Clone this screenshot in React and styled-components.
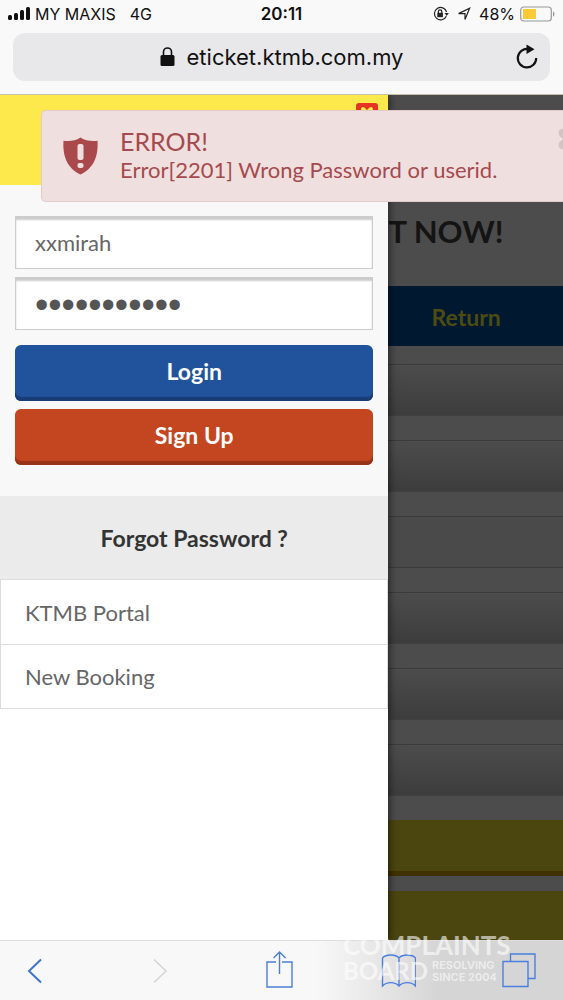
import React from 'react';
import styled, { createGlobalStyle } from 'styled-components';

const GlobalStyle = createGlobalStyle`
  * {
    box-sizing: border-box;
  }
  body {
    margin: 0;
    font-family: Lato, "Liberation Sans", sans-serif;
    font-size: 22px;
    color: #555;
    background: #fff;
  }
  button, input {
    font: inherit;
  }
  svg {
    flex: none;
  }
`;

const Screen = styled.div`
  display: flex;
  flex-direction: column;
  min-height: 100vh;
  overflow: hidden;
`;

const BrowserTop = styled.header`
  position: relative;
  z-index: 1;
  padding-bottom: 13px;
  background: #f9f9f9;
  border-bottom: 1px solid #c4c1ae;
  font-family: Inter, "Liberation Sans", sans-serif;
  color: #111;
`;

const StatusBar = styled.div`
  display: grid;
  grid-template-columns: 1fr auto 1fr;
  align-items: center;
  height: 28px;
  padding: 0 8px;
  font-size: 16px;
`;

const StatusGroup = styled.div`
  display: flex;
  align-items: center;
  justify-content: ${props => props.$end ? 'flex-end' : 'flex-start'};
  gap: ${props => props.$gap}px;
`;

const Clock = styled.span`
  font-size: 17px;
  font-weight: 600;
`;

const AddressBar = styled.div`
  display: grid;
  grid-template-columns: 24px 1fr 24px;
  align-items: center;
  height: 48px;
  margin: 5px 13px 0;
  padding: 0 11px;
  border-radius: 12px;
  background: #e8e8ea;
`;

const Address = styled.button`
  grid-column: 2;
  display: flex;
  align-items: center;
  justify-content: center;
  gap: 12px;
  padding: 0;
  border: none;
  background: none;
  color: #111;
  font-size: 22px;
`;

const IconButton = styled.button`
  display: flex;
  padding: 0;
  border: none;
  background: none;
  color: ${props => props.$color || '#111'};
`;

const Content = styled.div`
  position: relative;
  flex: 1;
  display: flex;
`;

const Drawer = styled.aside`
  flex: 0 0 69%;
  position: relative;
  background: #fff;
  box-shadow: 1px 0 8px rgba(0, 0, 0, 0.6);
`;

const DrawerTop = styled.div`
  display: flex;
  justify-content: flex-end;
  align-items: flex-start;
  height: 90px;
  padding: 8px 10px;
  background: #fde94b;
`;

const CloseDrawer = styled.button`
  display: flex;
  justify-content: center;
  width: 22px;
  height: 22px;
  padding: 3px;
  border: none;
  border-radius: 3px;
  background: #e63323;
`;

const LoginForm = styled.form`
  display: flex;
  flex-direction: column;
  gap: 8px;
  padding: 31px 15px;
  background: #f8f8f8;
`;

const Field = styled.input`
  width: 100%;
  height: 53px;
  padding: 0 19px;
  border: 1px solid #ccc;
  border-radius: 0;
  outline: none;
  background: #fff;
  box-shadow: inset 0 3px 2px #ccc;
  color: #666;
`;

const PasswordField = styled(Field)`
  padding-top: 4px;
  font-family: "Liberation Sans", sans-serif;
  font-size: 38px;
  color: #555;
`;

const Buttons = styled.div`
  display: flex;
  flex-direction: column;
  gap: 8px;
  padding-top: 7px;
`;

const Button = styled.button`
  height: 56px;
  padding: 0 0 4px;
  border: none;
  border-radius: 6px;
  background: ${props => props.$color};
  box-shadow: inset 0 -4px 1px ${props => props.$edge};
  color: #fff;
  font-size: 23px;
  font-weight: 700;
`;

const ForgotLink = styled.a`
  display: flex;
  align-items: center;
  justify-content: center;
  height: 83px;
  background: #ebebeb;
  color: #333;
  font-size: 23px;
  font-weight: 700;
  text-decoration: none;
`;

const Menu = styled.nav`
  border: 1px solid #ddd;
`;

const MenuLink = styled.a`
  display: flex;
  align-items: center;
  height: 64px;
  padding: 0 24px;
  color: #666;
  text-decoration: none;

  & + & {
    border-top: 1px solid #ddd;
  }
`;

const Booking = styled.main`
  flex: 1;
  min-width: 0;
  display: flex;
  flex-direction: column;
  overflow: hidden;
  background: #4c4c4c;
`;

const BookingTitle = styled.h1`
  margin: 0;
  padding: 118px 0 37px;
  color: #141414;
  font-size: 31px;
  line-height: 36px;
  white-space: nowrap;
`;

const TabHeader = styled.div`
  height: 60px;
  padding-left: 43px;
  background: #001930;
  color: #4d4b12;
  font-size: 23px;
  font-weight: 700;
  line-height: 62px;
`;

const BookingFields = styled.div`
  display: flex;
  flex-direction: column;
  gap: 24px;
  padding: 18px 0 24px;
`;

const BookingField = styled.div`
  height: 52px;
  border-top: 1px solid #3b3b3b;
  border-bottom: 1px solid ${props => props.$flat ? '#3b3b3b' : '#404040'};
  background: ${props => props.$flat ? '#4a4a4a' : 'linear-gradient(#4c4c4c, #3d3d3d)'};
`;

const YellowBar = styled.div`
  flex: ${props => props.$grow ? '1' : '0 0 56px'};
  margin-bottom: ${props => props.$grow ? 0 : 15}px;
  border-bottom: ${props => props.$grow ? 'none' : '5px solid #3f3100'};
  background: #4b4510;
`;

const Toast = styled.div`
  position: absolute;
  top: 15px;
  left: 41px;
  right: 0;
  display: flex;
  align-items: center;
  height: 92px;
  padding-left: 20px;
  border: 1px solid #e3c9c9;
  border-right: none;
  border-radius: 5px 0 0 5px;
  background: #f0dfdf;
  color: #a54a4e;
  overflow: hidden;
`;

const ToastText = styled.div`
  flex: 1;
  padding: 0 0 3px 21px;
  line-height: 28px;
  white-space: nowrap;
`;

const ToastTitle = styled.div`
  font-size: 25px;
  line-height: 30px;
`;

const ToastClose = styled.button`
  align-self: flex-start;
  display: flex;
  width: 5px;
  margin-top: 16px;
  padding: 0;
  border: none;
  background: none;
  overflow: hidden;
`;

const Toolbar = styled.footer`
  position: relative;
  display: flex;
  align-items: center;
  justify-content: space-between;
  height: 60px;
  padding: 0 27px 0 18px;
  border-top: 1px solid #ddd;
  background: linear-gradient(to right, #f8f8f8 56%, #d5d5d5 78%);
`;

const Watermark = styled.div`
  position: absolute;
  right: 45px;
  bottom: 17px;
  width: 175px;
  color: rgba(255, 255, 255, 0.6);
  font-size: 26px;
  font-weight: 700;
  line-height: 25px;
  pointer-events: none;
`;

const WatermarkRow = styled.div`
  display: flex;
  align-items: center;
  gap: 4px;
  font-size: 24px;
`;

const WatermarkSmall = styled.span`
  font-family: Inter, sans-serif;
  font-size: 11px;
  font-weight: 600;
  line-height: 12px;
  white-space: nowrap;
`;

const SignalIcon = () => (
  <svg width="23" height="14" viewBox="0 0 23 14" fill="#111">
    <rect x="0" y="8" width="4" height="5" rx="1.5" />
    <rect x="6" y="6" width="4" height="7" rx="1.5" />
    <rect x="12" y="3" width="4" height="10" rx="1.5" />
    <rect x="18" y="0" width="4" height="13" rx="1.5" />
  </svg>
);

const RotationLockIcon = () => (
  <svg width="16" height="16" viewBox="0 0 16 16" fill="none" stroke="#222" strokeWidth="1.2">
    <path d="M13.3 10.2A6.2 6.2 0 1 1 13.6 6" />
    <path d="M11.6 7h4.2l-2.1 3z" fill="#222" stroke="none" />
    <rect x="4.3" y="6.8" width="5.6" height="4.4" fill="#222" stroke="none" />
    <path d="M5.4 7V5.6a1.7 1.7 0 0 1 3.4 0V7" />
  </svg>
);

const LocationIcon = () => (
  <svg width="14" height="14" viewBox="0 0 14 14" fill="none" stroke="#222" strokeWidth="1.2">
    <path d="M12.6 1.2L8 12.5V6.6H1.6z" />
  </svg>
);

const BatteryIcon = () => (
  <svg width="35" height="16" viewBox="0 0 35 16" fill="none">
    <rect x="0.7" y="1" width="30.6" height="14" rx="3" stroke="#999" strokeWidth="1.2" />
    <rect x="3" y="3" width="13" height="10" fill="#fcc937" />
    <path d="M33 5.5c2 .6 2 4.4 0 5z" fill="#999" />
  </svg>
);

const LockIcon = () => (
  <svg width="15" height="20" viewBox="0 0 15 20">
    <rect x="0.5" y="8" width="14" height="11" rx="1.5" fill="#111" />
    <path d="M3.5 9V5a4 4 0 0 1 8 0v4" fill="none" stroke="#111" strokeWidth="1.6" />
  </svg>
);

const ReloadIcon = () => (
  <svg width="24" height="26" viewBox="0 0 24 26" fill="none" stroke="#111" strokeWidth="2.2">
    <path d="M13.5 5.1A9.2 9.2 0 1 0 21.2 14" />
    <path d="M11.5 0.5v9.5l8-4.8z" fill="#111" stroke="none" />
  </svg>
);

const ShieldIcon = () => (
  <svg width="37" height="38" viewBox="0 0 37 38">
    <path d="M18.5 0.5c5 3.3 10.5 4 17 3.3C36.5 18 32.5 31 18.5 37.5 4.5 31 .5 18 1.5 3.8 8 4.5 13.5 3.8 18.5 .5z" fill="#a9494c" />
    <rect x="15.5" y="7" width="6" height="16" rx="2" fill="#f0dfdf" />
    <rect x="15.5" y="26" width="6" height="5" rx="2" fill="#f0dfdf" />
  </svg>
);

const BackIcon = () => (
  <svg width="34" height="34" viewBox="0 0 34 34" fill="none" stroke="currentColor" strokeWidth="2">
    <path d="M23 5.5L11 17l12 11.5" />
  </svg>
);

const ForwardIcon = () => (
  <svg width="34" height="34" viewBox="0 0 34 34" fill="none" stroke="currentColor" strokeWidth="1.6">
    <path d="M15 5.5L27 17 15 28.5" />
  </svg>
);

const ShareIcon = () => (
  <svg width="34" height="40" viewBox="0 0 34 40" fill="none" stroke="currentColor" strokeWidth="1.4">
    <path d="M17 11H8v25h25V11H23" />
    <path d="M20.5 23V1M14.5 7l6-6 6 6" />
  </svg>
);

const BookIcon = () => (
  <svg width="36" height="34" viewBox="0 0 36 34" fill="none" stroke="currentColor" strokeWidth="1.4">
    <path d="M19 4C15.5 0 6 0 2.5 4v28c4-4.5 12.5-4.5 16.5 0 4-4.5 12.5-4.5 16.5 0V4C32 0 22.5 0 19 4zM19 4v28" />
  </svg>
);

const TabsIcon = () => (
  <svg width="34" height="36" viewBox="0 0 34 36" fill="none" stroke="currentColor" strokeWidth="1.4">
    <path d="M1 8.5h25v25H1z" />
    <path d="M8.5 8.5V1h24.5v24.5h-7" />
  </svg>
);

class App extends React.Component {
  constructor(props) {
    super(props);
    this.state = {
      userid: 'xxmirah',
      password: 'ktmbpasswrd'
    };

    this.handleChange = this.handleChange.bind(this);
    this.handleSubmit = this.handleSubmit.bind(this);
  }

  handleChange(event) {
    this.setState({[event.target.id]: event.target.value});
  }

  handleSubmit(event) {
    event.preventDefault();
  }

  render() {
    return (
      <Screen>
        <GlobalStyle />
        <BrowserTop>
          <StatusBar>
            <StatusGroup $gap={4}>
              <SignalIcon />
              <StatusGroup $gap={14}>
                <span>MY MAXIS</span>
                <span>4G</span>
              </StatusGroup>
            </StatusGroup>
            <Clock>20:11</Clock>
            <StatusGroup $end $gap={8}>
              <RotationLockIcon />
              <LocationIcon />
              <StatusGroup $gap={5}>
                <span>48%</span>
                <BatteryIcon />
              </StatusGroup>
            </StatusGroup>
          </StatusBar>
          <AddressBar>
            <Address type="button">
              <LockIcon />
              <span>eticket.ktmb.com.my</span>
            </Address>
            <IconButton type="button" aria-label="Reload"><ReloadIcon /></IconButton>
          </AddressBar>
        </BrowserTop>

        <Content>
          <Drawer>
            <DrawerTop>
              <CloseDrawer type="button" aria-label="Close menu">
                <svg width="14" height="14" viewBox="0 0 14 14" stroke="#fde94b" strokeWidth="4" strokeLinecap="round">
                  <path d="M3 3l8 8M11 3l-8 8" />
                </svg>
              </CloseDrawer>
            </DrawerTop>
            <LoginForm onSubmit={this.handleSubmit}>
              <Field id="userid" type="text" aria-label="User id" value={this.state.userid} onChange={this.handleChange} />
              <PasswordField id="password" type="password" aria-label="Password" value={this.state.password} onChange={this.handleChange} />
              <Buttons>
                <Button type="submit" $color="#20539c" $edge="#193c75">Login</Button>
                <Button type="button" $color="#c44621" $edge="#963318">Sign Up</Button>
              </Buttons>
            </LoginForm>
            <ForgotLink href="#forgot">Forgot Password ?</ForgotLink>
            <Menu>
              <MenuLink href="#portal">KTMB Portal</MenuLink>
              <MenuLink href="#booking">New Booking</MenuLink>
            </Menu>
          </Drawer>

          <Booking>
            <BookingTitle>T NOW!</BookingTitle>
            <TabHeader>Return</TabHeader>
            <BookingFields>
              <BookingField />
              <BookingField />
              <BookingField $flat />
              <BookingField />
              <BookingField />
              <BookingField />
            </BookingFields>
            <YellowBar />
            <YellowBar $grow />
          </Booking>

          <Toast role="alert">
            <ShieldIcon />
            <ToastText>
              <ToastTitle>ERROR!</ToastTitle>
              Error[2201] Wrong Password or userid.
            </ToastText>
            <ToastClose type="button" aria-label="Dismiss">
              <svg width="24" height="24" viewBox="0 0 24 24" stroke="#d6c3c4" strokeWidth="9" strokeLinecap="round">
                <path d="M5 6l14 12M5 18L19 6" />
              </svg>
            </ToastClose>
          </Toast>
        </Content>

        <Toolbar>
          <IconButton type="button" aria-label="Back" $color="#3f74d1"><BackIcon /></IconButton>
          <IconButton type="button" aria-label="Forward" $color="#d5d5d5"><ForwardIcon /></IconButton>
          <IconButton type="button" aria-label="Share" $color="#4a7fd6"><ShareIcon /></IconButton>
          <IconButton type="button" aria-label="Bookmarks" $color="#4a7fe0"><BookIcon /></IconButton>
          <IconButton type="button" aria-label="Tabs" $color="#4a7fe0"><TabsIcon /></IconButton>
          <Watermark>
            <div>COMPLAINTS</div>
            <WatermarkRow>
              <span>BOARD</span>
              <WatermarkSmall>RESOLVING<br />SINCE 2004</WatermarkSmall>
            </WatermarkRow>
          </Watermark>
        </Toolbar>
      </Screen>
    );
  }
}

export default App;
